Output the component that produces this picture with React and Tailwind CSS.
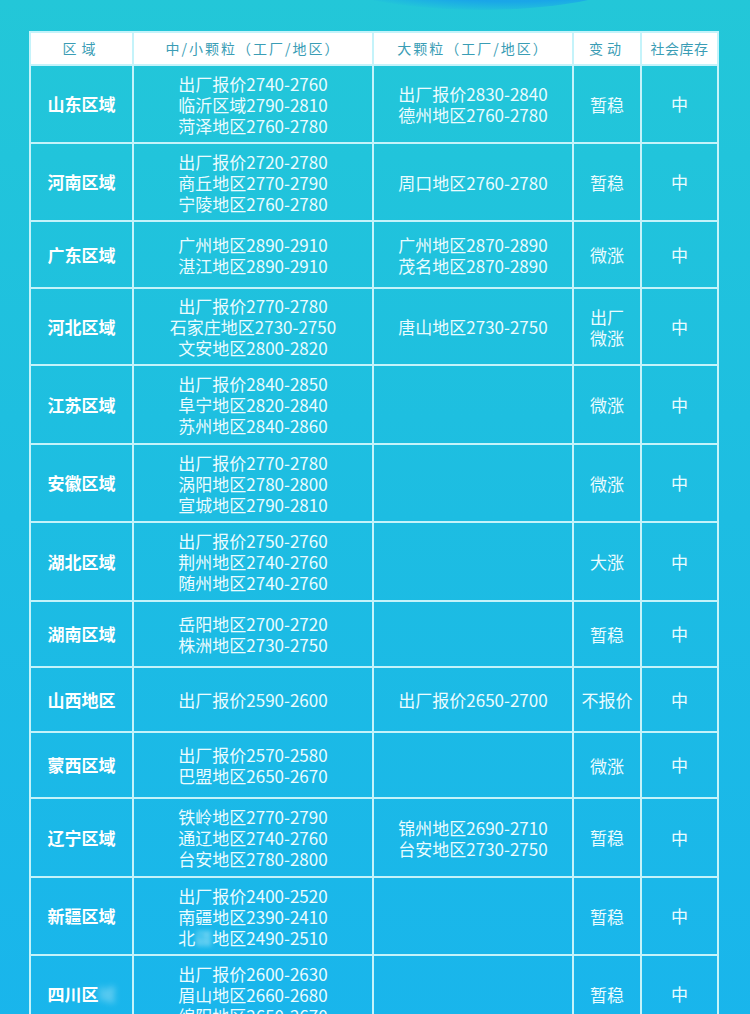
const rows = [
  { area: '山东区域', small: ['出厂报价2740-2760', '临沂区域2790-2810', '菏泽地区2760-2780'], big: ['出厂报价2830-2840', '德州地区2760-2780'], change: ['暂稳'], h: 'h-[78px]' },
  { area: '河南区域', small: ['出厂报价2720-2780', '商丘地区2770-2790', '宁陵地区2760-2780'], big: ['周口地区2760-2780'], change: ['暂稳'], h: 'h-[78px]' },
  { area: '广东区域', small: ['广州地区2890-2910', '湛江地区2890-2910'], big: ['广州地区2870-2890', '茂名地区2870-2890'], change: ['微涨'], h: 'h-[67px]' },
  { area: '河北区域', small: ['出厂报价2770-2780', '石家庄地区2730-2750', '文安地区2800-2820'], big: ['唐山地区2730-2750'], change: ['出厂', '微涨'], h: 'h-[77px]' },
  { area: '江苏区域', small: ['出厂报价2840-2850', '阜宁地区2820-2840', '苏州地区2840-2860'], big: [], change: ['微涨'], h: 'h-[79px]' },
  { area: '安徽区域', small: ['出厂报价2770-2780', '涡阳地区2780-2800', '宣城地区2790-2810'], big: [], change: ['微涨'], h: 'h-[78px]' },
  { area: '湖北区域', small: ['出厂报价2750-2760', '荆州地区2740-2760', '随州地区2740-2760'], big: [], change: ['大涨'], h: 'h-[79px]' },
  { area: '湖南区域', small: ['岳阳地区2700-2720', '株洲地区2730-2750'], big: [], change: ['暂稳'], h: 'h-[66px]' },
  { area: '山西地区', small: ['出厂报价2590-2600'], big: ['出厂报价2650-2700'], change: ['不报价'], h: 'h-[65px]' },
  { area: '蒙西区域', small: ['出厂报价2570-2580', '巴盟地区2650-2670'], big: [], change: ['微涨'], h: 'h-[66px]' },
  { area: '辽宁区域', small: ['铁岭地区2770-2790', '通辽地区2740-2760', '台安地区2780-2800'], big: ['锦州地区2690-2710', '台安地区2730-2750'], change: ['暂稳'], h: 'h-[79px]' },
  { area: '新疆区域', small: ['出厂报价2400-2520', '南疆地区2390-2410', 'BLUR'], big: [], change: ['暂稳'], h: 'h-[78px]' },
  { area: 'BLUR', small: ['出厂报价2600-2630', '眉山地区2660-2680', '绵阳地区2650-2670'], big: [], change: ['暂稳'], h: 'h-[78px]' },
]

function Lines({ items }) {
  return (
    <div className="flex flex-col items-center leading-[21px]">
      {items.map((t) =>
        t === 'BLUR' ? (
          <span key={t}>
            北<span className="blur-[2px] opacity-60">疆</span>地区2490-2510
          </span>
        ) : (
          <span key={t}>{t}</span>
        )
      )}
    </div>
  )
}

export default function App() {
  const cell = 'border-2 border-[#c4f3fa] text-center align-middle'
  const head = 'border-2 border-[#c4f3fa] bg-white text-[#3a9db5] font-normal text-[14px] h-[33px]'

  return (
    <div className="relative min-h-screen overflow-hidden bg-gradient-to-b from-[#23c7d8] via-[#1dbde2] to-[#19b5ec] pt-[31px] pl-[29px] text-[#eafcff] font-['Noto_Sans_CJK_SC',sans-serif]">
      {/* decorative blob from the banner above */}
      <div className="absolute left-[320px] top-[-66px] h-[76px] w-[320px] rounded-[50%] bg-[radial-gradient(ellipse_at_60%_50%,#1592e6_0%,#1aa6e8_55%,rgba(34,199,216,0)_75%)]" />
      <table className="relative w-[688px] table-fixed border-collapse text-[17px]">
        <colgroup>
          <col className="w-[103px]" />
          <col className="w-[240px]" />
          <col className="w-[200px]" />
          <col className="w-[68px]" />
          <col className="w-[77px]" />
        </colgroup>
        <thead>
          <tr>
            <th className={`${head} tracking-[5px]`}>区域</th>
            <th className={`${head} tracking-[2px]`}>中/小颗粒（工厂/地区）</th>
            <th className={`${head} tracking-[2px]`}>大颗粒（工厂/地区）</th>
            <th className={`${head} tracking-[4px]`}>变动</th>
            <th className={`${head} tracking-[0.5px]`}>社会库存</th>
          </tr>
        </thead>
        <tbody>
          {rows.map((r) => (
            <tr key={r.area + r.small[0]} className={r.h}>
              <td className={`${cell} font-bold text-white`}>
                {r.area === 'BLUR' ? (
                  <span>
                    四川区<span className="blur-[3px] opacity-40">域</span>
                  </span>
                ) : (
                  r.area
                )}
              </td>
              <td className={cell}>
                <Lines items={r.small} />
              </td>
              <td className={cell}>
                <Lines items={r.big} />
              </td>
              <td className={cell}>
                <Lines items={r.change} />
              </td>
              <td className={cell}>中</td>
            </tr>
          ))}
        </tbody>
      </table>
    </div>
  )
}
